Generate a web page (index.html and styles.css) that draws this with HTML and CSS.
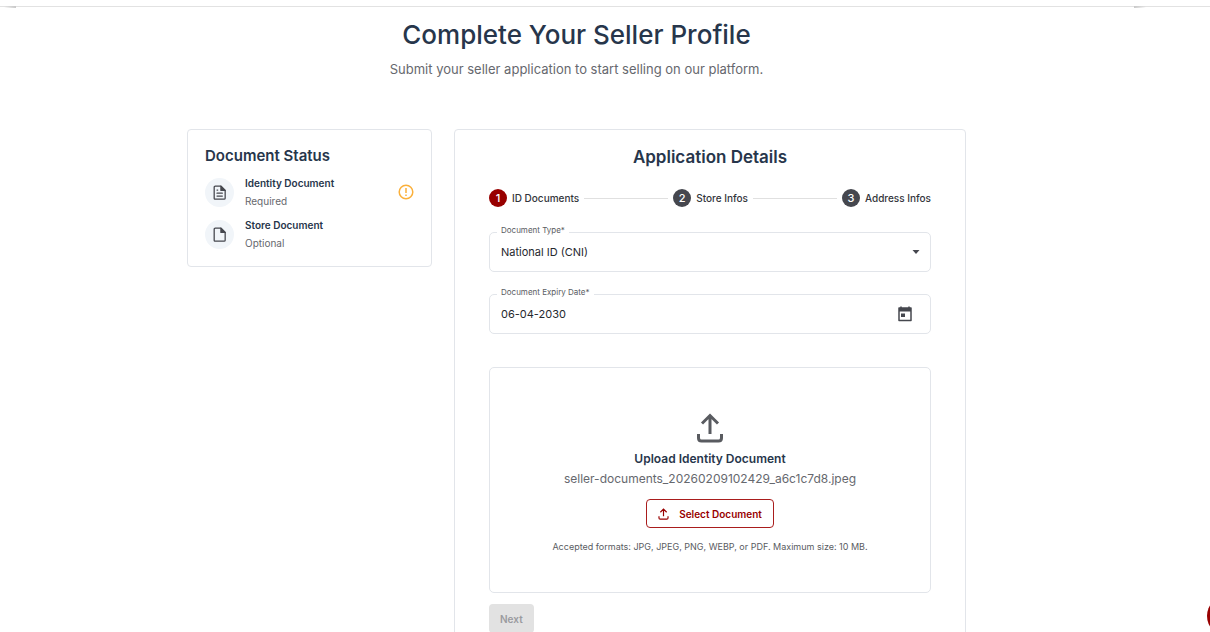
FILE: index.html
```html
<!DOCTYPE html>
<html lang="en">
<head>
<meta charset="utf-8">
<title>Complete Your Seller Profile</title>
<link rel="stylesheet" href="styles.css">
</head>
<body>
<div class="topbar"><span class="topbar-shade topbar-shade-start"></span><span class="topbar-shade topbar-shade-end"></span></div>
<main class="page">
  <header class="intro">
    <h1>Complete Your Seller Profile</h1>
    <p>Submit your seller application to start selling on our platform.</p>
  </header>
  <div class="columns">
    <aside class="card status">
      <h2>Document Status</h2>
      <ul class="docs">
        <li class="doc">
          <span class="doc-icon"><svg viewBox="0 0 24 24" width="17" height="17" fill="none" stroke="currentColor" stroke-width="1.800" stroke-linejoin="round" stroke-linecap="round"><path d="M6 3h8l6 6v11q0 1.500-1.500 1.500h-12.500q-1.500 0-1.500-1.500V4.500q0-1.500 1.500-1.500z"/><path d="M14 3v6h6z" fill="currentColor"/><path d="M8.500 8.500h1M8.500 13h7.500M8.500 17h7.500"/></svg></span>
          <div class="doc-text"><h3>Identity Document</h3><p>Required</p></div>
          <svg class="warn" viewBox="0 0 16 16" width="16" height="16" fill="none" stroke="currentColor" stroke-width="1.500"><circle cx="8" cy="8" r="6.800"/><path d="M8 4v5M8 10.500v1.500"/></svg>
        </li>
        <li class="doc">
          <span class="doc-icon"><svg viewBox="0 0 24 24" width="17" height="17" fill="none" stroke="currentColor" stroke-width="1.800" stroke-linejoin="round"><path d="M6 3h8l6 6v11q0 1.500-1.500 1.500h-12.500q-1.500 0-1.500-1.500V4.500q0-1.500 1.500-1.500z"/><path d="M14 3v6h6z" fill="currentColor"/></svg></span>
          <div class="doc-text"><h3>Store Document</h3><p>Optional</p></div>
        </li>
      </ul>
    </aside>
    <section class="card details">
      <h2>Application Details</h2>
      <ol class="steps">
        <li class="step step-active"><span class="num">1</span>ID Documents</li>
        <li class="rule"></li>
        <li class="step"><span class="num">2</span>Store Infos</li>
        <li class="rule"></li>
        <li class="step"><span class="num">3</span>Address Infos</li>
      </ol>
      <form>
        <div class="field">
          <label for="doc-type">Document Type*</label>
          <select id="doc-type"><option>National ID (CNI)</option></select>
          <svg class="caret" viewBox="0 0 8 4" width="8" height="4"><path d="M0.500 0h7L4 4z" fill="currentColor"/></svg>
        </div>
        <div class="field">
          <label for="expiry">Document Expiry Date*</label>
          <input id="expiry" type="text" value="06-04-2030">
          <button class="calendar" type="button" aria-label="Open calendar"><svg viewBox="0 0 14 16" width="14" height="16"><path d="M3 0.500v3M11 0.500v3" stroke="currentColor" stroke-width="1.500"/><path d="M1 2h12v12.500H1z" fill="none" stroke="currentColor" stroke-width="1.500" stroke-linejoin="round"/><path d="M1 2h12v3.500H1zM3 7.500h4v3.500H3z" fill="currentColor"/></svg></button>
        </div>
        <div class="upload">
          <svg class="upload-icon" viewBox="0 0 28 30" width="28" height="30" fill="none" stroke="currentColor" stroke-width="3"><path d="M14 21V3M6 10.500l8-8 8 8M2.500 21v4q0 3 3 3h17q3 0 3-3v-4"/></svg>
          <h3>Upload Identity Document</h3>
          <p class="filename">seller-documents_20260209102429_a6c1c7d8.jpeg</p>
          <button class="select-doc" type="button"><svg viewBox="0 0 28 30" width="11" height="12" fill="none" stroke="currentColor" stroke-width="3"><path d="M14 21V3M6 10.500l8-8 8 8M2.500 21v4q0 3 3 3h17q3 0 3-3v-4"/></svg>Select Document</button>
          <p class="hint">Accepted formats: JPG, JPEG, PNG, WEBP, or PDF. Maximum size: 10 MB.</p>
        </div>
        <button class="next" type="submit" disabled>Next</button>
      </form>
    </section>
  </div>
</main>
<button class="chat" type="button" aria-label="Open chat"></button>
</body>
</html>
```
FILE: styles.css
```css
* { box-sizing: border-box; }
body { margin: 0; background: #fff; color: #45474e; font-family: Inter, "Liberation Sans", sans-serif; font-size: 10px; overflow: hidden; height: 100vh; }
h1, h2, h3, p, ul, ol { margin: 0; padding: 0; }
ul, ol { list-style: none; }
button, input, select { font: inherit; color: inherit; }
svg { display: block; flex: none; }

.topbar { position: relative; height: 7px; border-bottom: 1px solid #e2e2e2; }
.topbar-shade { position: absolute; top: 6px; width: 12px; height: 2px; }
.topbar-shade-start { left: 4px; background: linear-gradient(to right, transparent, #c8c8c8); }
.topbar-shade-end { right: 64px; background: linear-gradient(to left, transparent, #c8c8c8); }

.page { padding: 12px 57px 0 0; }
.intro { text-align: center; }
.intro h1 { font-size: 26px; line-height: 32px; font-weight: 500; color: #27364b; }
.intro p { font-size: 13px; line-height: 20px; margin-top: 8px; color: #66686e; }
.columns { display: grid; grid-template-columns: 245fr 512fr; gap: 22px; align-items: start; width: 68%; max-width: 779px; margin: 50px auto 0; }
.card { border: 1px solid #e2e5ea; border-radius: 4px; background: #fff; }
h2, h3 { color: #27364b; font-weight: 600; }

.status { padding: 15px 17px 14px; }
.status h2 { font-size: 15px; line-height: 22px; }
.docs { display: grid; gap: 6px; margin-top: 7px; }
.doc { display: flex; align-items: center; gap: 11px; }
.doc-icon { display: grid; place-items: center; width: 29px; height: 29px; border-radius: 50%; background: #f1f5f9; }
.doc-text { flex: 1; }
.doc h3 { font-size: 10px; line-height: 18px; }
.doc p { line-height: 18px; color: #66686e; }
.warn { color: #fbb03b; }

.details { padding: 15px 34px 24px; }
.details h2 { font-size: 17px; line-height: 24px; text-align: center; }
.steps { display: flex; align-items: center; gap: 5px; margin-top: 20px; }
.step { display: flex; align-items: center; gap: 5px; line-height: 18px; white-space: nowrap; color: #33353b; font-weight: 500; }
.num { width: 18px; height: 18px; border-radius: 50%; background: #45474e; color: #fff; text-align: center; font-size: 11px; }
.step-active .num { background: #980000; }
.rule { flex: 1; border-top: 1px solid #e0e0e0; }

.field { position: relative; height: 40px; margin-top: 22px; }
.steps + form .field:first-child { margin-top: 25px; }
.field label { position: absolute; left: 8px; top: -8px; padding: 0 4px; background: #fff; font-size: 8px; line-height: 12px; color: #5a5c62; }
.field select, .field input { appearance: none; width: 100%; height: 100%; padding: 0 11px; border: 1px solid #e2e5ea; border-radius: 5px; background: #fff; color: #26282e; font-size: 11px; outline: 0; }
.caret { position: absolute; right: 11px; top: 18px; }
.calendar { position: absolute; right: 15px; top: 8px; padding: 4px; border: 0; background: none; }

.upload { display: flex; flex-direction: column; align-items: center; margin-top: 33px; padding: 45px 16px 38px; border: 1px solid #e2e5ea; border-radius: 5px; }
.upload-icon { color: #595b60; }
.upload h3 { font-size: 12px; line-height: 18px; margin-top: 7px; }
.filename { font-size: 12px; line-height: 18px; margin-top: 2px; color: #66686e; }
.select-doc { display: flex; align-items: center; gap: 10px; height: 29px; margin-top: 11px; padding: 0 11px; border: 1px solid #a91d1d; border-radius: 4px; background: #fff; color: #980000; font-weight: 600; }
.hint { font-size: 9px; line-height: 14px; margin-top: 12px; color: #5a5c62; }
.next { margin-top: 11px; padding: 0 11px; height: 29px; border: 0; border-radius: 4px; background: #e2e2e2; color: #9a9b9f; font-weight: 600; }
.chat { position: fixed; right: -37px; bottom: -4px; width: 40px; height: 40px; padding: 0; border: 0; border-radius: 50%; background: #980000; }
```
